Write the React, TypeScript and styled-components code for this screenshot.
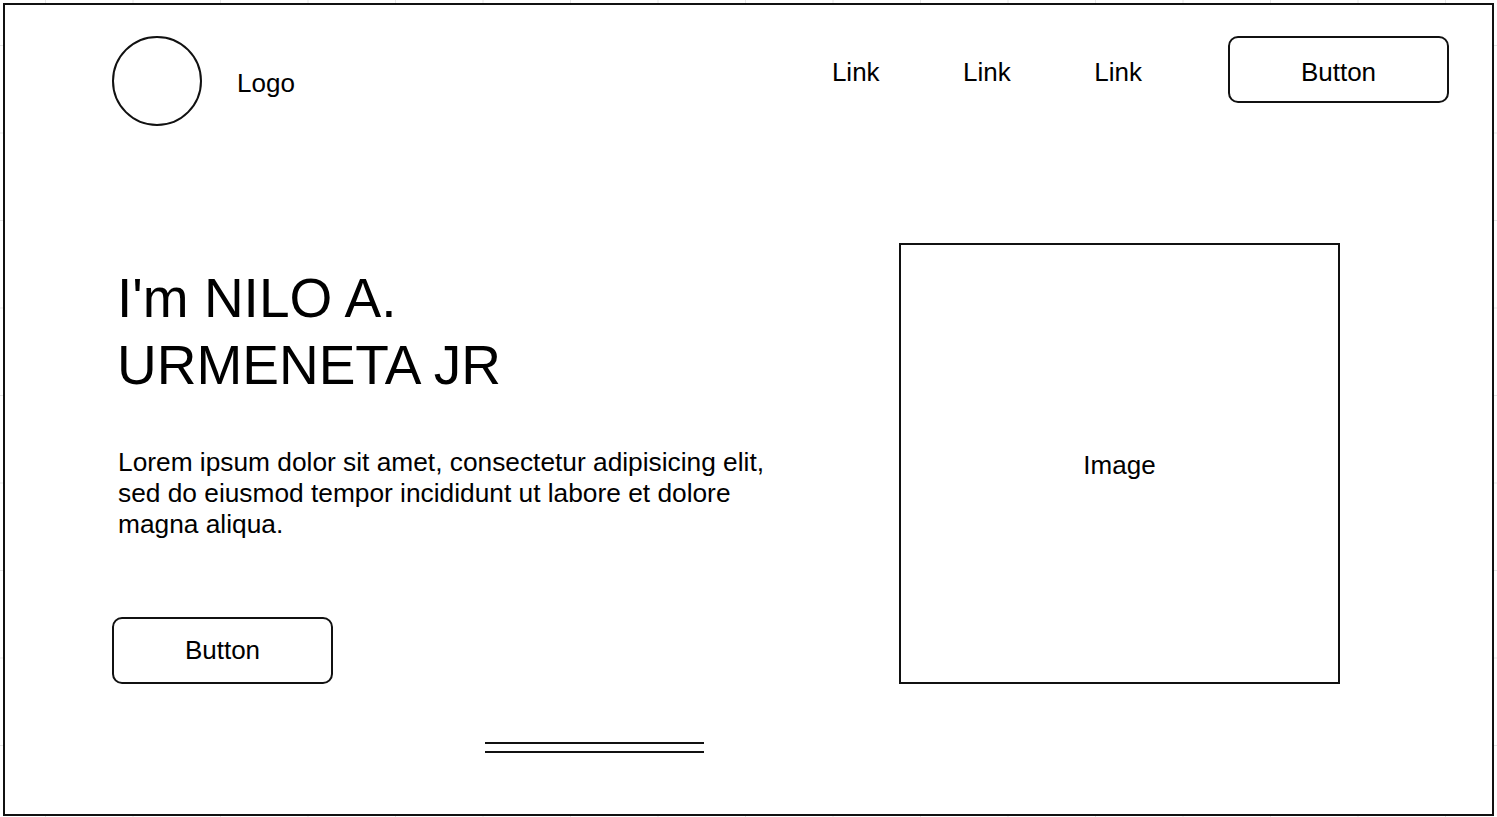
import React from "react";
import styled, { createGlobalStyle } from "styled-components";

const GlobalStyle = createGlobalStyle`
  html, body {
    margin: 0;
    padding: 0;
  }
  body {
    min-height: 817px;
    background-color: #ffffff;
    background-image:
      linear-gradient(#e6e6e6 1px, transparent 1px),
      linear-gradient(90deg, #e6e6e6 1px, transparent 1px);
    background-size: 87.5px 87.5px;
    background-position: 45px 45px;
    font-family: "Liberation Sans", Arial, Helvetica, sans-serif;
    color: #000;
  }
  #root {
    padding: 3px;
  }
`;

const Frame = styled.div`
  box-sizing: border-box;
  width: 1491px;
  height: 813px;
  border: 2px solid #111;
  background: #fff;
  display: flex;
  flex-direction: column;
`;

const Header = styled.header`
  display: flex;
  justify-content: space-between;
  align-items: flex-start;
  padding: 31px 43px 0 107px;
`;

const Brand = styled.div`
  display: flex;
  align-items: center;
  gap: 35px;
`;

const LogoCircle = styled.div`
  box-sizing: border-box;
  width: 90px;
  height: 90px;
  border: 2px solid #111;
  border-radius: 50%;
`;

const BrandText = styled.span`
  font-size: 26px;
  margin-top: 4px;
`;

const Nav = styled.nav`
  display: flex;
  align-items: center;
  gap: 83px;
`;

const NavLink = styled.a`
  font-size: 26px;
  color: #000;
  text-decoration: none;
  margin-top: 5px;
`;

const NavLinks = styled.div`
  display: flex;
  align-items: center;
  gap: 83.5px;
  margin-right: 3px;
`;

const OutlineButton = styled.button<{ $textOffset?: number }>`
  box-sizing: border-box;
  width: 221px;
  height: 67px;
  border: 2px solid #111;
  border-radius: 10px;
  background: #fff;
  font-family: inherit;
  font-size: 26px;
  color: #000;
  display: flex;
  align-items: center;
  justify-content: center;
  padding: ${(p) => p.$textOffset ?? 0}px 0 0;
`;

const Hero = styled.section`
  display: grid;
  grid-template-columns: 787px 441px;
  align-items: end;
  padding-left: 107px;
  margin-top: 117px;
`;

const HeroText = styled.div`
  display: flex;
  flex-direction: column;
  align-items: flex-start;
`;

const Heading = styled.h1`
  margin: 0 0 0 5px;
  font-size: 55px;
  font-weight: 400;
  line-height: 67px;
`;

const Lead = styled.p`
  margin: 48px 0 77px 6px;
  width: 670px;
  font-size: 26.3px;
  line-height: 31px;
`;

const ImageBox = styled.div`
  box-sizing: border-box;
  width: 441px;
  height: 441px;
  border: 2px solid #111;
  display: flex;
  align-items: center;
  justify-content: center;
  font-size: 26px;
  padding-top: 3px;
`;

const Footer = styled.div`
  padding-left: 480px;
  margin-top: 58px;
`;

const DoubleRule = styled.div`
  box-sizing: border-box;
  width: 219px;
  height: 11px;
  border-top: 2px solid #111;
  border-bottom: 2px solid #111;
`;

export default function App() {
  return (
    <>
      <GlobalStyle />
      <Frame>
        <Header>
          <Brand>
            <LogoCircle />
            <BrandText>Logo</BrandText>
          </Brand>
          <Nav>
            <NavLinks>
              <NavLink>Link</NavLink>
              <NavLink>Link</NavLink>
              <NavLink>Link</NavLink>
            </NavLinks>
            <OutlineButton $textOffset={5}>Button</OutlineButton>
          </Nav>
        </Header>
        <Hero>
          <HeroText>
            <Heading>
              I'm NILO A.
              <br />
              URMENETA JR
            </Heading>
            <Lead>
              Lorem ipsum dolor sit amet, consectetur adipisicing elit, sed do
              eiusmod tempor incididunt ut labore et dolore magna aliqua.
            </Lead>
            <OutlineButton $textOffset={0}>Button</OutlineButton>
          </HeroText>
          <ImageBox>Image</ImageBox>
        </Hero>
        <Footer>
          <DoubleRule />
        </Footer>
      </Frame>
    </>
  );
}
